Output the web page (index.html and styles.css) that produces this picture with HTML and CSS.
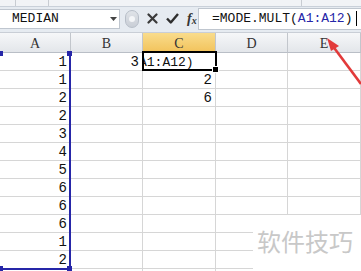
FILE: index.html
```html
<!DOCTYPE html>
<html lang="zh-CN">
<head>
    <meta charset="UTF-8">
    <meta name="viewport" content="width=device-width, initial-scale=1.0">
    <title>MODE.MULT</title>
    <link rel="stylesheet" href="styles.css">
</head>
<body>

<div id="app">
    <div class="ribbon-tail">
        <span class="rt-group rt-a"></span>
        <span class="rt-group rt-b"></span>
        <span class="rt-group rt-c"></span>
    </div>

    <div class="formula-bar">
        <div class="name-box">
            <span class="name-text">MEDIAN</span>
            <svg class="name-drop" width="7" height="4" viewBox="0 0 7 4"><path d="M0 0h7L3.5 4z" fill="#444"/></svg>
        </div>
        <div class="fb-buttons">
            <span class="grip"><span class="grip-dot"></span></span>
            <svg class="fb-icon" width="11" height="11" viewBox="0 0 11 11"><path d="M1.5 1.5l8 8M9.5 1.5l-8 8" stroke="#3a3a3a" stroke-width="2.2" stroke-linecap="round"/></svg>
            <svg class="fb-icon" width="13" height="11" viewBox="0 0 13 11"><path d="M1 5.5l3.8 4L12 1" stroke="#2e2e2e" stroke-width="2.4" fill="none" stroke-linejoin="round"/></svg>
            <span class="fx">f<sub>x</sub></span>
        </div>
        <div class="formula-input">=MODE.MULT(<span class="ref">A1:A12</span>)<span class="caret"></span></div>
    </div>

    <div class="sheet">
        <div class="grid">
            <div class="hd">A</div>
            <div class="hd">B</div>
            <div class="hd hd-active">C</div>
            <div class="hd">D</div>
            <div class="hd">E</div>

            <div class="cell num">1</div><div class="cell num">3</div><div class="cell edit"><span>A1:A12)</span></div><div class="cell"></div><div class="cell"></div>
            <div class="cell num">1</div><div class="cell"></div><div class="cell num">2</div><div class="cell"></div><div class="cell"></div>
            <div class="cell num">2</div><div class="cell"></div><div class="cell num">6</div><div class="cell"></div><div class="cell"></div>
            <div class="cell num">2</div><div class="cell"></div><div class="cell"></div><div class="cell"></div><div class="cell"></div>
            <div class="cell num">3</div><div class="cell"></div><div class="cell"></div><div class="cell"></div><div class="cell"></div>
            <div class="cell num">4</div><div class="cell"></div><div class="cell"></div><div class="cell"></div><div class="cell"></div>
            <div class="cell num">5</div><div class="cell"></div><div class="cell"></div><div class="cell"></div><div class="cell"></div>
            <div class="cell num">6</div><div class="cell"></div><div class="cell"></div><div class="cell"></div><div class="cell"></div>
            <div class="cell num">6</div><div class="cell"></div><div class="cell"></div><div class="cell"></div><div class="cell"></div>
            <div class="cell num">6</div><div class="cell"></div><div class="cell"></div><div class="cell"></div><div class="cell"></div>
            <div class="cell num">1</div><div class="cell"></div><div class="cell"></div><div class="cell"></div><div class="cell"></div>
            <div class="cell num">2</div><div class="cell"></div><div class="cell"></div><div class="cell"></div><div class="cell"></div>
            <div class="cell"></div><div class="cell"></div><div class="cell"></div><div class="cell"></div><div class="cell"></div>
        </div>

        <!-- range reference A1:A12 -->
        <div class="ref-range">
            <span class="handle h-tl"></span>
            <span class="handle h-tr"></span>
            <span class="handle h-bl"></span>
            <span class="handle h-br"></span>
        </div>

        <!-- active cell C1 -->
        <div class="active-cell"><span class="fill-handle"></span></div>

        <div class="watermark">软件技巧</div>
    </div>

    <svg class="arrow" width="361" height="271" viewBox="0 0 361 271">
        <path d="M361 84L332 45" stroke="#e23a3a" stroke-width="2.6" fill="none"/>
        <path d="M327 38L339 46L331 51z" fill="#e23a3a"/>
    </svg>
</div>

</body>
</html>
```

FILE: styles.css
```css
:root {
    --grid-line: #d6d6d6;
    --header-line: #c2c6cc;
    --ref-blue: #2626a8;
    --bar-bg: #e6ebf1;
}

html, body {
    margin: 0;
    padding: 0;
    background: #fff;
}

#app {
    position: relative;
    width: 361px;
    height: 271px;
    overflow: hidden;
    font-family: "Liberation Mono", "DejaVu Sans Mono", monospace;
    color: #111;
}

/* bottom edge of the ribbon */
.ribbon-tail {
    height: 7px;
    display: flex;
    background: #f1f3f6;
    border-bottom: 1px solid #c9d0d9;
    box-sizing: border-box;
}

.rt-group {
    border-right: 1px solid #c8ccd2;
}

.rt-a { width: 15px; }
.rt-b { width: 32px; }
.rt-c { width: 252px; }

.formula-bar {
    height: 26px;
    display: flex;
    align-items: center;
    background: var(--bar-bg);
    border-bottom: 1px solid #c9ced6;
    box-sizing: border-box;
    padding: 1px 0 3px;
}

.name-box {
    width: 120px;
    height: 20px;
    display: flex;
    align-items: center;
    justify-content: space-between;
    background: #fff;
    border: 1px solid #bfc6cf;
    border-left: none;
    box-sizing: border-box;
    padding: 0 2px 0 12px;
    font-size: 13px;
}

.fb-buttons {
    width: 78px;
    display: flex;
    align-items: center;
    gap: 8px;
    padding-left: 5px;
    box-sizing: border-box;
}

.grip {
    width: 14px;
    height: 18px;
    border-radius: 9px;
    background: linear-gradient(#dfe3e8, #c9ced6);
    border: 1px solid #b7bec8;
    box-sizing: border-box;
    display: flex;
    align-items: center;
    justify-content: center;
}

.grip-dot {
    width: 6px;
    height: 6px;
    border-radius: 50%;
    background: #f4f6f8;
}

.fx {
    font-family: "Liberation Serif", serif;
    font-style: italic;
    font-weight: bold;
    font-size: 14px;
    color: #333;
    line-height: 1;
}

.fx sub {
    font-size: 10px;
    vertical-align: -1px;
}

.formula-input {
    flex: 1;
    height: 22px;
    display: flex;
    align-items: center;
    background: #fff;
    border: 1px solid #bfc6cf;
    border-right: none;
    box-sizing: border-box;
    padding-left: 13px;
    font-size: 13px;
    white-space: nowrap;
}

.ref {
    color: var(--ref-blue);
}

.caret {
    width: 1px;
    height: 15px;
    background: #000;
    margin-left: 4px;
}

/* sheet */
.sheet {
    position: relative;
}

.grid {
    display: grid;
    grid-template-columns: 71px 72px 73px 72px 73px;
    grid-template-rows: 20px;
    grid-auto-rows: 18px;
}

.hd {
    display: flex;
    align-items: center;
    justify-content: center;
    padding-top: 2px;
    background: linear-gradient(#f6f7f9, #e3e6ea);
    border-right: 1px solid var(--header-line);
    border-bottom: 1px solid #b9bec6;
    box-sizing: border-box;
    font-family: "Liberation Serif", serif;
    font-size: 14px;
    color: #333;
}

.hd-active {
    background: linear-gradient(#f9dc8c, #f2c35c);
    border-bottom-color: #c9a040;
}

.cell {
    border-right: 1px solid var(--grid-line);
    border-bottom: 1px solid var(--grid-line);
    box-sizing: border-box;
    font-size: 14px;
    line-height: 19px;
    padding: 0 3px;
    overflow: hidden;
    white-space: nowrap;
}

.num {
    text-align: right;
}

.cell.edit {
    padding-left: 0;
}

.cell.edit span {
    display: inline-block;
    margin-left: -4px;
    font-size: 13px;
}

.ref-range {
    position: absolute;
    left: 0;
    top: 20px;
    width: 71px;
    height: 217px;
    border-right: 2px solid var(--ref-blue);
    border-bottom: 2px solid var(--ref-blue);
    box-sizing: border-box;
}

.handle {
    position: absolute;
    width: 5px;
    height: 5px;
    background: var(--ref-blue);
}

.h-tl { left: -2px; top: -2px; }
.h-tr { right: -3px; top: -2px; }
.h-bl { left: -2px; bottom: -3px; }
.h-br { right: -3px; bottom: -3px; }

.active-cell {
    position: absolute;
    left: 142px;
    top: 18px;
    width: 75px;
    height: 20px;
    border: 2px solid #000;
    box-sizing: border-box;
}

.fill-handle {
    position: absolute;
    right: -4px;
    bottom: -4px;
    width: 5px;
    height: 5px;
    background: #000;
    border: 1px solid #fff;
}

.watermark {
    position: absolute;
    left: 253px;
    top: 182px;
    width: 108px;
    height: 60px;
    background: #fff;
    box-sizing: border-box;
    padding: 8px 0 0 4px;
    font-family: "Noto Sans CJK SC", sans-serif;
    font-size: 24px;
    color: #c8c8c8;
    line-height: 36px;
}

.arrow {
    position: absolute;
    left: 0;
    top: 0;
    pointer-events: none;
}
```
